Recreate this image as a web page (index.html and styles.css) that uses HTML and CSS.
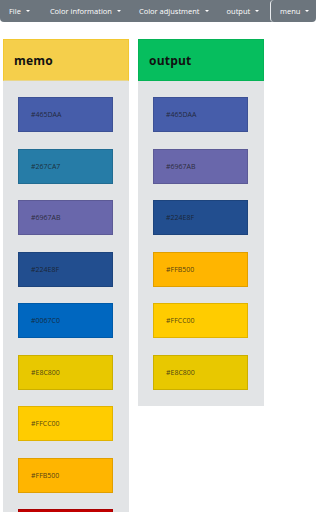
FILE: index.html
```html
<!DOCTYPE html>
<html>
<head>
<meta charset="utf-8">
<link rel="stylesheet" href="styles.css">
</head>
<body>
<nav class="navbar">
  <div class="nav-group">
    <button class="nav-btn">File <span class="caret"></span></button>
    <button class="nav-btn">Color information <span class="caret"></span></button>
    <button class="nav-btn">Color adjustment <span class="caret"></span></button>
    <button class="nav-btn">output <span class="caret"></span></button>
  </div>
  <button class="nav-btn menu-btn">menu <span class="caret"></span></button>
</nav>
<main class="board">
  <section class="column">
    <header class="col-head memo-head">memo</header>
    <div class="col-body">
      <div class="swatch" style="background:#465DAA">#465DAA</div>
      <div class="swatch" style="background:#267CA7">#267CA7</div>
      <div class="swatch" style="background:#6967AB">#6967AB</div>
      <div class="swatch" style="background:#224E8F">#224E8F</div>
      <div class="swatch" style="background:#0067C0">#0067C0</div>
      <div class="swatch" style="background:#E8C800">#E8C800</div>
      <div class="swatch" style="background:#FFCC00">#FFCC00</div>
      <div class="swatch" style="background:#FFB500">#FFB500</div>
      <div class="swatch" style="background:#C00000">#C00000</div>
    </div>
  </section>
  <section class="column">
    <header class="col-head output-head">output</header>
    <div class="col-body">
      <div class="swatch" style="background:#465DAA">#465DAA</div>
      <div class="swatch" style="background:#6967AB">#6967AB</div>
      <div class="swatch" style="background:#224E8F">#224E8F</div>
      <div class="swatch" style="background:#FFB500">#FFB500</div>
      <div class="swatch" style="background:#FFCC00">#FFCC00</div>
      <div class="swatch" style="background:#E8C800">#E8C800</div>
    </div>
  </section>
</main>
</body>
</html>
```
FILE: styles.css
```css
* { box-sizing: border-box; }
html, body { margin: 0; padding: 0; background: #fff; }
body {
  font-family: "Open Sans", "Noto Sans", sans-serif;
  width: 319px;
  height: 512px;
  overflow: hidden;
}
.navbar {
  display: flex;
  width: 316px;
  height: 22px;
  background: #6c757d;
  border-radius: 0 0 4px 4px;
}
.nav-group { display: flex; }
.nav-btn {
  display: flex;
  align-items: center;
  gap: 3px;
  height: 22px;
  padding: 0 9px;
  border: none;
  background: transparent;
  color: #fff;
  font-family: inherit;
  font-size: 7.5px;
  white-space: nowrap;
  cursor: pointer;
}
.nav-btn:first-child { padding-left: 9px; }
.nav-group .nav-btn:nth-child(2) { padding-left: 11px; }
.menu-btn {
  margin-left: auto;
  border-left: 1px solid #e9ecef;
  border-radius: 4px;
  padding: 0 9px 0 9px;
  width: 46px;
}
.caret {
  display: inline-block;
  width: 0;
  height: 0;
  border-left: 2.5px solid transparent;
  border-right: 2.5px solid transparent;
  border-top: 2.5px solid #fff;
  margin-left: 2px;
}
.board {
  display: flex;
  align-items: flex-start;
  gap: 9px;
  padding: 17px 0 0 3px;
}
.column {
  width: 126px;
  display: flex;
  flex-direction: column;
}
.col-head {
  height: 42px;
  display: flex;
  align-items: center;
  padding-left: 10px;
  font-size: 12px;
  font-weight: 700;
  color: #111;
  letter-spacing: 0.2px;
}
.memo-head { background: #f5cf4b; border: 1px solid #f2c832; border-bottom-color: #e9d68a; }
.output-head { background: #06be5e; border: 1px solid #05b356; }
.col-body {
  background: #e2e4e6;
  padding: 16px 15px 16px 15px;
  display: flex;
  flex-direction: column;
  gap: 16.5px;
}
.swatch {
  height: 35px;
  width: 95px;
  display: flex;
  align-items: center;
  padding-left: 12px;
  font-size: 7px;
  color: rgba(25, 25, 25, 0.8);
  border: 1px solid rgba(0, 0, 0, 0.12);
}
```
